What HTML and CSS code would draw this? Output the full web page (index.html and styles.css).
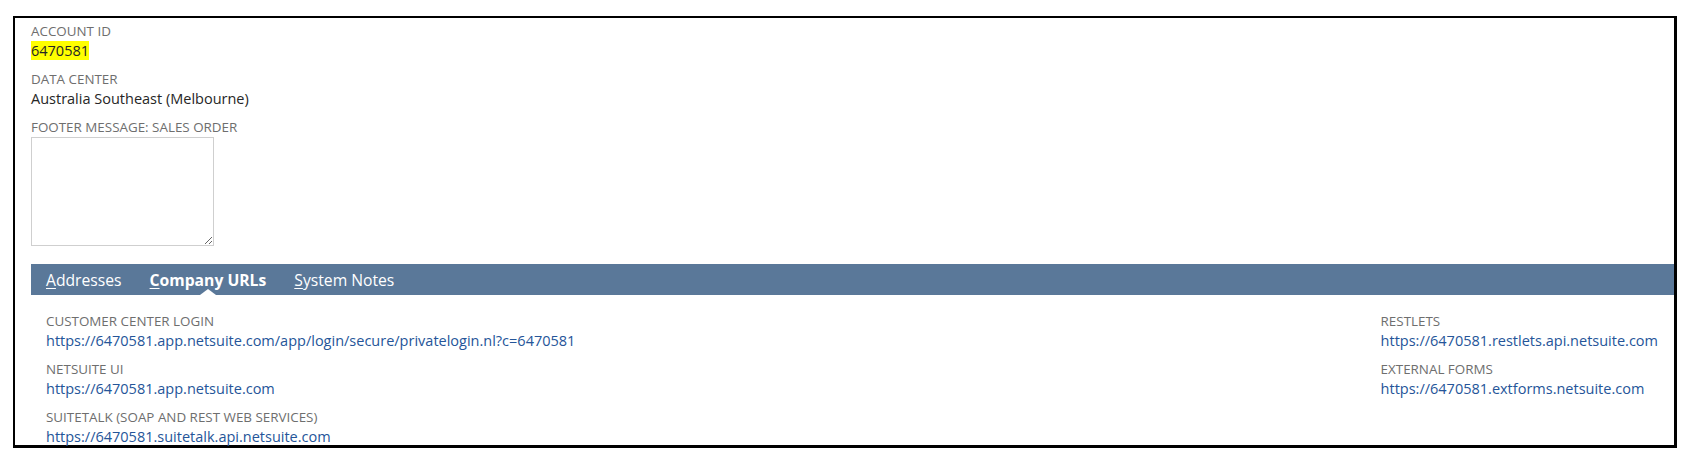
FILE: index.html
```html
<!DOCTYPE html>
<html lang="en">
<head>
<meta charset="utf-8">
<title>Company Information</title>
<link rel="stylesheet" href="styles.css">
</head>
<body>
<div class="frame">
  <div class="fields">
    <div class="field">
      <div class="label">ACCOUNT ID</div>
      <div class="value"><span class="hl">6470581</span></div>
    </div>
    <div class="field">
      <div class="label">DATA CENTER</div>
      <div class="value">Australia Southeast (Melbourne)</div>
    </div>
    <div class="field">
      <div class="label">FOOTER MESSAGE: SALES ORDER</div>
      <textarea class="area"></textarea>
    </div>
  </div>

  <div class="tabbar">
    <span class="tab"><u>A</u>ddresses</span>
    <span class="tab active"><u>C</u>ompany URLs</span>
    <span class="tab"><u>S</u>ystem Notes</span>
  </div>

  <div class="urls">
    <div class="col">
      <div class="field">
        <div class="label">CUSTOMER CENTER LOGIN</div>
        <div class="value"><a class="link">https://6470581.app.netsuite.com/app/login/secure/privatelogin.nl?c=6470581</a></div>
      </div>
      <div class="field">
        <div class="label">NETSUITE UI</div>
        <div class="value"><a class="link">https://6470581.app.netsuite.com</a></div>
      </div>
      <div class="field">
        <div class="label">SUITETALK (SOAP AND REST WEB SERVICES)</div>
        <div class="value"><a class="link">https://6470581.suitetalk.api.netsuite.com</a></div>
      </div>
    </div>
    <div class="col">
      <div class="field">
        <div class="label">RESTLETS</div>
        <div class="value"><a class="link">https://6470581.restlets.api.netsuite.com</a></div>
      </div>
      <div class="field">
        <div class="label">EXTERNAL FORMS</div>
        <div class="value"><a class="link">https://6470581.extforms.netsuite.com</a></div>
      </div>
    </div>
  </div>
</div>
</body>
</html>
```

FILE: styles.css
```css
html, body {
  margin: 0;
  padding: 0;
  background: #ffffff;
}

body {
  font-family: "Open Sans", "Liberation Sans", sans-serif;
  color: #262626;
}

.frame {
  box-sizing: border-box;
  margin: 16px 0 0 13px;
  width: 1664px;
  height: 432px;
  border-style: solid;
  border-color: #000000;
  border-width: 2px 3px 3px 2px;
  padding: 4px 0 0 16px;
}

.field {
  margin-bottom: 9px;
}

.label {
  font-size: 13.4px;
  line-height: 19px;
  color: #6e6e6e;
}

.value {
  font-size: 14.5px;
  line-height: 20px;
  color: #262626;
  white-space: nowrap;
}

.hl {
  background: #ffff00;
}

.area {
  display: block;
  box-sizing: border-box;
  width: 183px;
  height: 109px;
  margin: 0;
  border: 1px solid #cfcfcf;
  border-radius: 0;
  background: #ffffff;
}

.fields .field:last-child {
  margin-bottom: 18px;
}

.tabbar {
  display: flex;
  gap: 28px;
  height: 31px;
  padding: 0 0 0 15px;
  background: #5a7899;
  box-sizing: border-box;
}

.tab {
  position: relative;
  font-size: 15.7px;
  line-height: 31px;
  padding-top: 1px;
  color: #ffffff;
  white-space: nowrap;
}

.tab u {
  text-decoration-thickness: 1px;
  text-underline-offset: 2px;
}

.tab.active {
  font-weight: 700;
}

.tab.active::after {
  content: "";
  position: absolute;
  left: 50%;
  bottom: 0;
  margin-left: -8px;
  border-left: 8px solid transparent;
  border-right: 8px solid transparent;
  border-bottom: 6px solid #ffffff;
}

.urls {
  display: flex;
  justify-content: space-between;
  padding: 17px 16px 0 15px;
}

.urls .col .field:last-child {
  margin-bottom: 0;
}

.link {
  color: #255599;
  text-decoration: none;
}
```
